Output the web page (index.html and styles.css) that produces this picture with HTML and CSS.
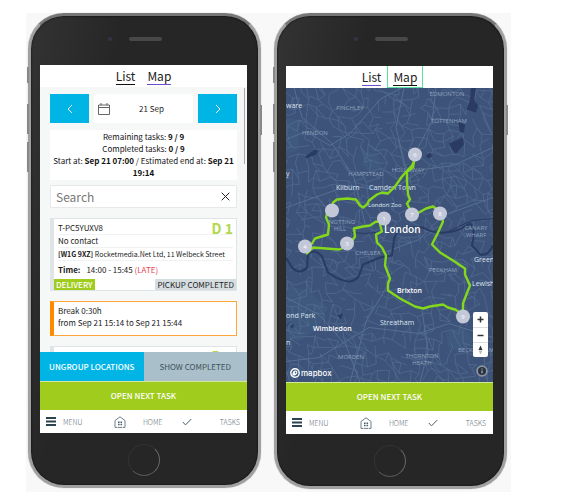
FILE: index.html
```html
<!DOCTYPE html>
<html lang="en">
<head>
<meta charset="utf-8">
<meta name="viewport" content="width=device-width, initial-scale=1">
<title>Driver tasks</title>
<link rel="stylesheet" href="styles.css">
</head>
<body>
<svg class="sprite" aria-hidden="true">
  <symbol id="i-menu" viewBox="0 0 10 9"><path d="M0 1h10M0 4.500h10M0 8h10" stroke="#2b4450" stroke-width="1.800"/></symbol>
  <symbol id="i-home" viewBox="0 0 12 12"><path d="M3 11.400H1V4.500L6 .8l5 3.700v6.900H9M3.500 11.400h5" fill="none" stroke="#5b6f7b" stroke-width=".9"/><path d="M4 5.500h1.600v1.500H4zM6.500 5.500h1.600v1.500H6.500zM4 7.700h1.600v1.500H4zM6.500 7.700h1.600v1.500H6.500z" fill="#4a5d68"/></symbol>
  <symbol id="i-check" viewBox="0 0 10 8"><path d="M.8 4l2.700 2.900L9.300 1" fill="none" stroke="#4a5d68"/></symbol>
</svg>
<main class="stage">
  <section class="phone">
    <i class="key key-a"></i><i class="key key-b"></i><i class="key key-c"></i><i class="key key-d"></i>
    <div class="top"><i class="camera"></i><i class="speaker"></i></div>
    <div class="screen">
      <nav class="tabs">
        <a class="tab current" href="#list">List</a>
        <a class="tab" href="#map">Map</a>
      </nav>
      <div class="list">
        <div class="dates">
          <button class="step" aria-label="Previous day"><svg width="6" height="10" viewBox="0 0 6 10"><path d="M5 1L1 5l4 4" fill="none" stroke="#fff"/></svg></button>
          <button class="day"><svg width="12" height="12" viewBox="0 0 12 12"><path d="M.5 2h11v9.500H.5zM.5 4.500h11M3 0v2.500M9 0v2.500" fill="none" stroke="#666"/></svg><span>21 Sep</span></button>
          <button class="step" aria-label="Next day"><svg width="6" height="10" viewBox="0 0 6 10"><path d="M1 1l4 4-4 4" fill="none" stroke="#fff"/></svg></button>
        </div>
        <p class="summary">Remaining tasks: <b>9 / 9</b><br>Completed tasks: <b>0 / 9</b><br>Start at: <b>Sep 21 07:00</b> / Estimated end at: <b>Sep 21 19:14</b></p>
        <div class="search">
          <input type="text" placeholder="Search" aria-label="Search">
          <button aria-label="Clear"><svg width="9" height="9" viewBox="0 0 9 9"><path d="M.7.7l7.600 7.600M8.300.7L.7 8.300" stroke="#222"/></svg></button>
        </div>
        <article class="card">
          <div class="row head"><span>T-PC5YUXV8</span><strong class="code">D 1</strong></div>
          <div class="row">No contact</div>
          <div class="row address"><b>[W1G 9XZ]</b> Rocketmedia.Net Ltd, 11 Welbeck Street</div>
          <div class="row time"><b>Time:</b><span>14:00 - 15:45 <em>(LATE)</em></span></div>
          <div class="tags"><span class="tag kind">DELIVERY</span><span class="tag state">PICKUP COMPLETED</span></div>
        </article>
        <article class="card break">Break 0:30h<br>from Sep 21 15:14 to Sep 21 15:44</article>
        <article class="card">
          <div class="row head"><span></span><strong class="code">D 2</strong></div>
        </article>
        <i class="thumb"></i>
      </div>
      <div class="pair"><button class="bar blue">UNGROUP LOCATIONS</button><button class="bar gray">SHOW COMPLETED</button></div>
      <button class="bar green">OPEN NEXT TASK</button>
      <nav class="foot">
        <a href="#menu"><svg width="10" height="9"><use href="#i-menu"/></svg><span>MENU</span></a>
        <a href="#home"><svg width="12" height="12"><use href="#i-home"/></svg><span>HOME</span></a>
        <a href="#tasks"><svg width="10" height="8"><use href="#i-check"/></svg><span>TASKS</span></a>
      </nav>
    </div>
    <div class="bottom"><i class="home-key"></i></div>
  </section>

  <section class="phone phone-map">
    <i class="key key-a"></i><i class="key key-b"></i><i class="key key-c"></i><i class="key key-d"></i>
    <div class="top"><i class="camera"></i><i class="speaker"></i></div>
    <div class="screen">
      <nav class="tabs">
        <a class="tab" href="#list">List</a>
        <a class="tab current focus" href="#map">Map</a>
      </nav>
      <div class="map">
        <svg class="canvas" viewBox="0 0 207 295" preserveAspectRatio="xMidYMid slice" role="img" aria-label="Route through London">
          <rect width="207" height="295" fill="#3d5379"/>
          <g fill="#405e80" opacity=".6"><path d="M0 199l20 3 22 18-10 22-20 12-12-4zM80 64l12 3 4 15-12 4-8-10zM0 30l14 3-2 30-12 4zM160 245l18-6 10 14-12 12-14-6z"/></g>
          <g id="roads" fill="none"></g>
          <g class="major"><path d="M0 52l20-8 24 14 20-12 30-34 22-12M8 0l8 30 30 26 22 34 12 50M207 60l-40 18-30 4-34 22-40-6-63 22M118 0l-8 40 10 42M150 0l-4 34-18 34M0 210l34 18 26 30 14 37M207 250l-44-14-30 10-50-6-50 30-33 4M104 194l-24 40-16 61M136 223l6 40-8 32M207 110l-50 18-24 24-32 12"/></g>
          <g class="water">
            <path d="M0 170l6 10q8 8 15 0l1-13q6-7 14 2l6 16q9 7 20 9 8 0 11-6l4-11 17-7 12-2 2-16q3-12 16-12l13 0q10 6 22 5 12 0 25-9 6 5 2 22l8 9q8 2 13-9"/>
            <path class="canal" d="M66 145q10 2 24 0M0 239l5-5M160 145l26-12 21-2"/>
            <path class="lake" d="M19 69l10-7 3 1-2 4-10 4zM185 0l5 0-2 13 4 5-2 7-10-3 4-9zM172 34l7 3-1 8-4 0zM163 56l14-6 1 7-8 9-4-4zM140 68l4-3 2 4-4 2zM51 228l6-2-2 6zM4 240l3-4 1 4z"/>
          </g>
          <g class="area">
            <text x="64" y="22">FINCHLEY</text><text x="29" y="47">HENDON</text><text x="80" y="88">HAMPSTEAD</text><text x="122" y="84">HOLLOWAY</text>
            <text x="161" y="8">EDMONTON</text><text x="163" y="35">TOTTENHAM</text><text x="56" y="136">NOTTING</text><text x="54" y="143">HILL</text>
            <text x="190" y="142">CANARY</text><text x="190" y="149">WHARF</text><text x="82" y="167">CHELSEA</text><text x="157" y="184">PECKHAM</text>
            <text x="65" y="271">MORDEN</text><text x="136" y="270">THORNTON</text><text x="136" y="277">HEATH</text><text x="190" y="264">BECKENHAM</text>
          </g>
          <g class="place">
            <text x="0" y="20">ware</text><text x="0" y="88">y</text><text x="50" y="102">Kilburn</text><text x="83" y="102">Camden Town</text><text class="small" x="82" y="119">London Zoo</text>
            <text x="188" y="174">Greenwich</text><text x="186" y="198">Lewisham</text><text class="bold" x="111" y="205">Brixton</text><text x="94" y="237">Streatham</text>
            <text class="bold" x="27" y="243">Wimbledon</text><text x="0" y="230">ond Park</text><text x="0" y="257">n</text>
          </g>
          <g class="route">
            <path d="M46 123l-5 3-1 4 3 7-1 10-13 4-3 5-3 2-2 8 6-6 13 1 13 1 8-3 4-4 4-6-1-8 9-2 7-1 6-4 8 1"/>
            <path d="M46 123l1-8 4-3 10-1 9 1 4 6 3 2 4-3 2-4 8-6 5-2 6 1 7-7 7-10 10-11 3-6"/>
            <path d="M128 74l-1 6-6 4 0 10 1 13 2 5-3 4 3 6 2 4 7-1 7-4 7-2 4 3 4 4 2 8-4 9-7 14 8 8 13 8 12 8 0 6 5 11-4 10-3 8 0 12"/>
            <path d="M98 131l-4 6 2 7-6 3 1 8 5 5 4 8-1 10 5 13-2 5 0 7 12 8 15 8 8 2 7-2 13-2 5 3 7 2 8 5"/>
          </g>
          <text class="city" x="98" y="145">London</text>
          <g class="stops">
            <circle cx="46" cy="123" r="7"/><circle cx="98" cy="131" r="7"/><circle cx="129" cy="67" r="7"/><circle cx="126" cy="127" r="7"/><circle cx="154" cy="126" r="7"/><circle cx="19" cy="159" r="7"/><circle cx="61" cy="156" r="7"/><circle cx="177" cy="229" r="7"/>
            <text x="98" y="133">1</text><text x="129" y="69">6</text><text x="126" y="129">7</text><text x="154" y="128">8</text><text x="19" y="161">4</text><text x="61" y="158">3</text><text x="177" y="231">9</text>
          </g>
        </svg>
        <a class="brand" href="#mapbox"><svg width="10" height="10" viewBox="0 0 10 10"><circle cx="5" cy="5" r="4.200" fill="#3d5379" stroke="#fff" stroke-width="1.400"/><path d="M2.500 7.500c-.5-3 .8-5 3-5 1.600 0 2.300 1.300 1.800 2.700-.7 2-2.600 2.600-4.800 2.300z" fill="#fff"/><path d="M5.500 3.300l.4 1 .9.300-.9.400-.4 1-.4-1-.9-.4.900-.3z" fill="#3d5379"/></svg><span>mapbox</span></a>
        <div class="controls">
          <button aria-label="Zoom in"><svg width="7" height="7" viewBox="0 0 7 7"><path d="M3.500.5v6M.5 3.500h6" stroke="#333" stroke-width="1.500"/></svg></button>
          <button aria-label="Zoom out"><svg width="7" height="7" viewBox="0 0 7 7"><path d="M.5 3.500h6" stroke="#333" stroke-width="1.500"/></svg></button>
          <button aria-label="Reset north"><svg width="7" height="10" viewBox="0 0 7 10"><path d="M3.500.5L5.500 5h-4z" fill="#333"/><path d="M1.500 5.500h4l-2 4z" fill="#bbb"/></svg></button>
        </div>
        <button class="info" aria-label="Attribution"><svg width="12" height="12" viewBox="0 0 12 12"><circle cx="6" cy="6" r="5" fill="#8d95a3" stroke="#8d95a3" stroke-width="1.500"/><circle cx="6" cy="6" r="4" fill="#2c3340"/><path d="M6 5.400v2.800M6 3.400v1.200" stroke="#9aa3b3" stroke-width="1.400"/></svg></button>
      </div>
      <button class="bar green">OPEN NEXT TASK</button>
      <nav class="foot">
        <a href="#menu"><svg width="10" height="9"><use href="#i-menu"/></svg><span>MENU</span></a>
        <a href="#home"><svg width="12" height="12"><use href="#i-home"/></svg><span>HOME</span></a>
        <a href="#tasks"><svg width="10" height="8"><use href="#i-check"/></svg><span>TASKS</span></a>
      </nav>
    </div>
    <div class="bottom"><i class="home-key"></i></div>
  </section>
</main>
<script src="roads.js"></script>
</body>
</html>
```
FILE: styles.css
```css
* { box-sizing: border-box; }
body {
  margin: 0;
  padding: 13px 54px 3px 26px;
  background: #fff;
  color: #222;
  font: 8px/12px "Noto Sans CJK SC", "Open Sans", sans-serif;
}
button, input { font: inherit; color: inherit; border: 0; padding: 0; margin: 0; background: none; border-radius: 0; }
a { color: inherit; text-decoration: none; }
p { margin: 0; }
svg { display: block; flex: none; }
.sprite { position: absolute; width: 0; height: 0; }

.stage {
  display: grid;
  grid-template-columns: 1fr 1fr;
  align-items: start;
  gap: 13px;
  padding: 0 4px 3px 2px;
  background: #f8f8f8;
}
.phone {
  position: relative;
  padding: 0 11px 0 9px;
  border: 3px solid #a0a0a0;
  border-top-color: #777;
  border-radius: 36px;
  background: linear-gradient(100deg, #333, #262626 30%);
  box-shadow: inset 0 0 2px #000, 0 0 1px #999;
}
.top { position: relative; height: 49px; }
.phone-map .top { height: 50px; }
.speaker, .camera { position: absolute; top: 21px; background: #484848; }
.speaker { left: 50%; width: 33px; height: 4px; margin-left: -15px; border-radius: 2px; }
.camera { left: 33%; width: 4px; height: 4px; border-radius: 50%; background: #33334a; }
.bottom { display: flex; justify-content: center; height: 52px; padding-top: 11px; }
.home-key { width: 32px; height: 32px; border: 1px solid #333; border-right-color: #666; border-bottom-color: #555; border-radius: 50%; }
.key { position: absolute; left: -4px; width: 2px; height: 30px; background: #888; }
.key-a { top: 51px; height: 16px; }
.key-b { top: 88px; }
.key-c { top: 126px; }
.key-d { top: 89px; left: auto; right: -4px; }

.screen { display: flex; flex-direction: column; aspect-ratio: 207 / 368; background: #fff; overflow: hidden; }
.tabs { flex: none; display: flex; justify-content: center; height: 22px; }
.tab { position: relative; height: 22px; padding: 0 6px; font-size: 12px; line-height: 21px; color: #222; }
.tab::after { content: ""; display: block; margin-top: -2px; border-bottom: 1px solid #6a4fd0; }
.tab.current::after { border-color: #111; }
.tab.focus { box-shadow: inset 1px 0 #5ce0a0, inset -1px 0 #5ce0a0, inset 0 -1px #5ce0a0; }

.list { position: relative; flex: 1; min-height: 0; overflow: hidden; padding: 7px 10px 0; background: #f6f7f7; }
.thumb { position: absolute; top: 1px; right: 2px; width: 1px; height: 76px; background: #aaa; }
.dates { display: flex; gap: 5px; height: 29px; }
.step { display: grid; place-items: center; flex: 0 0 39px; background: #00b5e6; }
.day { display: flex; align-items: center; flex: 1; padding: 0 4px; background: #fff; }
.day span { flex: 1; padding-left: 4px; text-align: center; }
.summary { margin-top: 7px; padding: 1px; text-align: center; background: #fff; color: #111; }
.search { display: flex; align-items: center; height: 23px; margin-top: 5px; padding: 0 6px 0 5px; border: 1px solid #e6e9ea; background: #fff; }
.search input { flex: 1; min-width: 0; height: 20px; font-size: 12px; line-height: 20px; outline: 0; }
.search input::placeholder { color: #777; opacity: 1; }
.card { position: relative; margin-top: 10px; padding: 3px 3px 0 4px; border: 1px solid #dfe5e7; border-left: 4px solid #dfe5e7; background: #fff; }
.row { height: 13px; border-bottom: 1px solid #f0f3f3; }
.head { display: flex; justify-content: space-between; }
.code { color: #b2d84c; font-size: 14px; line-height: 12px; }
.address { font-size: 7px; }
.time { display: flex; gap: 6px; height: 18px; padding-top: 3px; border: 0; }
.time em { color: #e8414f; font-style: normal; }
.tags { display: flex; justify-content: space-between; margin: 0 -3px 0 -4px; }
.tag { padding: 0 2px; line-height: 11px; }
.kind { background: #a0cc1e; color: #fff; font-weight: 500; }
.state { background: #d5dde0; }
.break { padding: 3px 4px 6px; border-color: #ffa73d; border-left-color: #ff8a00; }

.pair { display: grid; grid-template-columns: 1fr 1fr; }
.bar { flex: none; height: 29px; text-align: center; }
.blue { background: #00b5e6; color: #fff; font-weight: 500; }
.gray { background: #a9c0cb; color: #3d5058; }
.green { background: #a0cc1e; color: #fff; font-weight: 500; border-top: 1px solid #d3e79c; }
.foot { flex: none; display: grid; grid-template-columns: 35% 35% auto; height: 23px; padding: 0 7px 0 6px; color: #66747c; font-size: 7px; font-weight: 300; }
.foot a { display: flex; align-items: center; gap: 7px; }
.foot a + a { gap: 17px; }
.foot a:last-child { gap: 28px; }

.map { position: relative; flex: 1; min-height: 0; background: #3d5379; }
.canvas { width: 100%; height: 100%; }
.canvas text { font-family: "Open Sans", sans-serif; }
.major { fill: none; stroke: #566f95; stroke-width: 1; }
.water { fill: none; stroke: #293b63; stroke-width: 2; }
.water .canal { stroke-width: 1; }
.water .lake { fill: #293b63; stroke: none; }
.area { fill: #8fa1bd; font-size: 6px; text-anchor: middle; }
.place { fill: #dce3ee; font-size: 7px; }
.place .small { font-size: 6px; }
.place .bold { fill: #fff; font-weight: 600; }
.city { fill: #fff; font-size: 10px; font-weight: 600; }
.route { fill: none; stroke: #84d81c; stroke-width: 2.4; stroke-linejoin: round; stroke-linecap: round; }
.stops { fill: #c3c8d9; }
.stops text { fill: #fff; font-size: 6px; text-anchor: middle; }
.brand { position: absolute; left: 4px; bottom: 4px; display: flex; align-items: center; gap: 1px; color: #fff; font: 500 8px/10px Inter, sans-serif; }
.controls { position: absolute; right: 5px; bottom: 25px; width: 15px; border-radius: 2px; background: #fff; }
.controls button { display: grid; place-items: center; width: 100%; height: 15px; }
.controls button + button { border-top: 1px solid #ddd; }
.info { position: absolute; right: 5px; bottom: 5px; }
```
FILE: roads.js
```js
// Draws the street mesh: a jittered grid whose nodes are joined at random.
var seed = 11;
function rnd() {
  seed = (seed * 16807) % 2147483647;
  return seed / 2147483647;
}
var step = 8, cols = 28, rows = 39, nodes = [], d = '';
for (var r = 0; r < rows; r++) {
  nodes.push([]);
  for (var c = 0; c < cols; c++) {
    nodes[r].push([(c - 0.5 + (rnd() - 0.5) * 0.9) * step, (r - 0.5 + (rnd() - 0.5) * 0.9) * step]);
  }
}
function join(a, b) {
  d += 'M' + a[0].toFixed(1) + ' ' + a[1].toFixed(1) + 'L' + b[0].toFixed(1) + ' ' + b[1].toFixed(1);
}
for (r = 0; r < rows - 1; r++) {
  for (c = 0; c < cols - 1; c++) {
    if (rnd() < 0.55) join(nodes[r][c], nodes[r][c + 1]);
    if (rnd() < 0.55) join(nodes[r][c], nodes[r + 1][c]);
    if (rnd() < 0.22) join(nodes[r][c], nodes[r + 1][c + 1]);
  }
}
var path = document.createElementNS('http://www.w3.org/2000/svg', 'path');
path.setAttribute('d', d);
path.setAttribute('stroke', '#536b91');
path.setAttribute('stroke-width', '0.8');
document.getElementById('roads').appendChild(path);
```
